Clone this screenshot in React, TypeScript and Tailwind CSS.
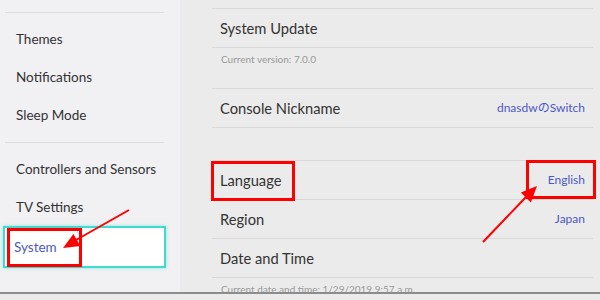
import React from 'react';

const FONT = { fontFamily: 'Lato, "Noto Sans CJK JP", sans-serif' };

const sideGroups = [
    ['Themes', 'Notifications', 'Sleep Mode'],
    ['Controllers and Sensors', 'TV Settings', 'System'],
];

const Row: React.FC<{ label: string; value?: string }> = ({ label, value }) => (
    <div className="h-[39px] border-b border-[#d9d9d9] flex items-center justify-between pl-2 pr-2">
        <span className="text-[14.7px] text-[#333]">{label}</span>
        {value && <span className="text-[12px] text-[#4b58c8]">{value}</span>}
    </div>
);

const App: React.FC = () => {
    return (
        <div className="relative w-[600px] h-[300px] overflow-hidden bg-[#ebebeb]" style={FONT}>
            <div className="flex h-[292px] overflow-hidden">
                {/* sidebar */}
                <aside className="w-[180px] shrink-0 bg-[#f1f0f3] pt-3">
                    {sideGroups.map((group, gi) => (
                        <div key={gi} className="border-t border-[#dddce0] ml-[5px] w-[159px] pt-[7px] pb-[8px]">
                            {group.map(item => {
                                const active = item === 'System';
                                if (active) {
                                    return (
                                        <div key={item} className="relative -ml-[2px] w-[163px] h-[42px] bg-white border-2 border-[#42d9cf] flex items-center shadow-[0_0_3px_#7fe6df]">
                                            <div className="w-[2px] h-[30px] bg-[#4a5bd0] ml-[3px]"></div>
                                            <span className="ml-[4px] text-[13.5px] text-[#4b58c8] whitespace-nowrap">{item}</span>
                                        </div>
                                    );
                                }
                                return (
                                    <div key={item} className="h-[38px] flex items-center pl-[11px] text-[13.5px] text-[#333] whitespace-nowrap">
                                        {item}
                                    </div>
                                );
                            })}
                        </div>
                    ))}
                </aside>

                {/* settings list */}
                <main className="flex-1 pl-[32px] pr-[7px]">
                    <div className="h-[9px] border-b border-[#d9d9d9]"></div>
                    <Row label="System Update" />
                    <div className="h-[41px] border-b border-[#d9d9d9] pl-[9px] pt-[4px] text-[10px] text-[#999]">
                        Current version: 7.0.0
                    </div>
                    <Row label="Console Nickname" value="dnasdwのSwitch" />
                    <div className="h-[33px] border-b border-[#d9d9d9]"></div>
                    <Row label="Language" value="English" />
                    <Row label="Region" value="Japan" />
                    <Row label="Date and Time" />
                    <div className="pl-[9px] pt-[5px] text-[10px] leading-[13px] text-[#999] whitespace-nowrap">
                        Current date and time: 1/29/2019 9:57 a.m.
                    </div>
                </main>
            </div>
            <div className="h-[8px] border-t-2 border-[#8c8c8c] bg-[#ebebeb]"></div>

            {/* annotations */}
            <div className="absolute left-[7px] top-[228px] w-[75px] h-[39px] border-[3px] border-[#ff0000]"></div>
            <div className="absolute left-[211px] top-[161px] w-[84px] h-[40px] border-[3px] border-[#ff0000]"></div>
            <div className="absolute left-[526px] top-[160px] w-[70px] h-[39px] border-[3px] border-[#ff0000]"></div>
            <svg className="absolute inset-0 pointer-events-none" width="600" height="300">
                <line x1="129" y1="210" x2="76" y2="240" stroke="#ff0000" strokeWidth="2" />
                <polygon points="63,248 80.4,246.1 73.4,233.9" fill="#ff0000" />
                <line x1="483" y1="242" x2="526" y2="197" stroke="#ff0000" strokeWidth="2" />
                <polygon points="537,186 530.9,202.4 520.9,192.6" fill="#ff0000" />
            </svg>
        </div>
    );
};

export default App;
